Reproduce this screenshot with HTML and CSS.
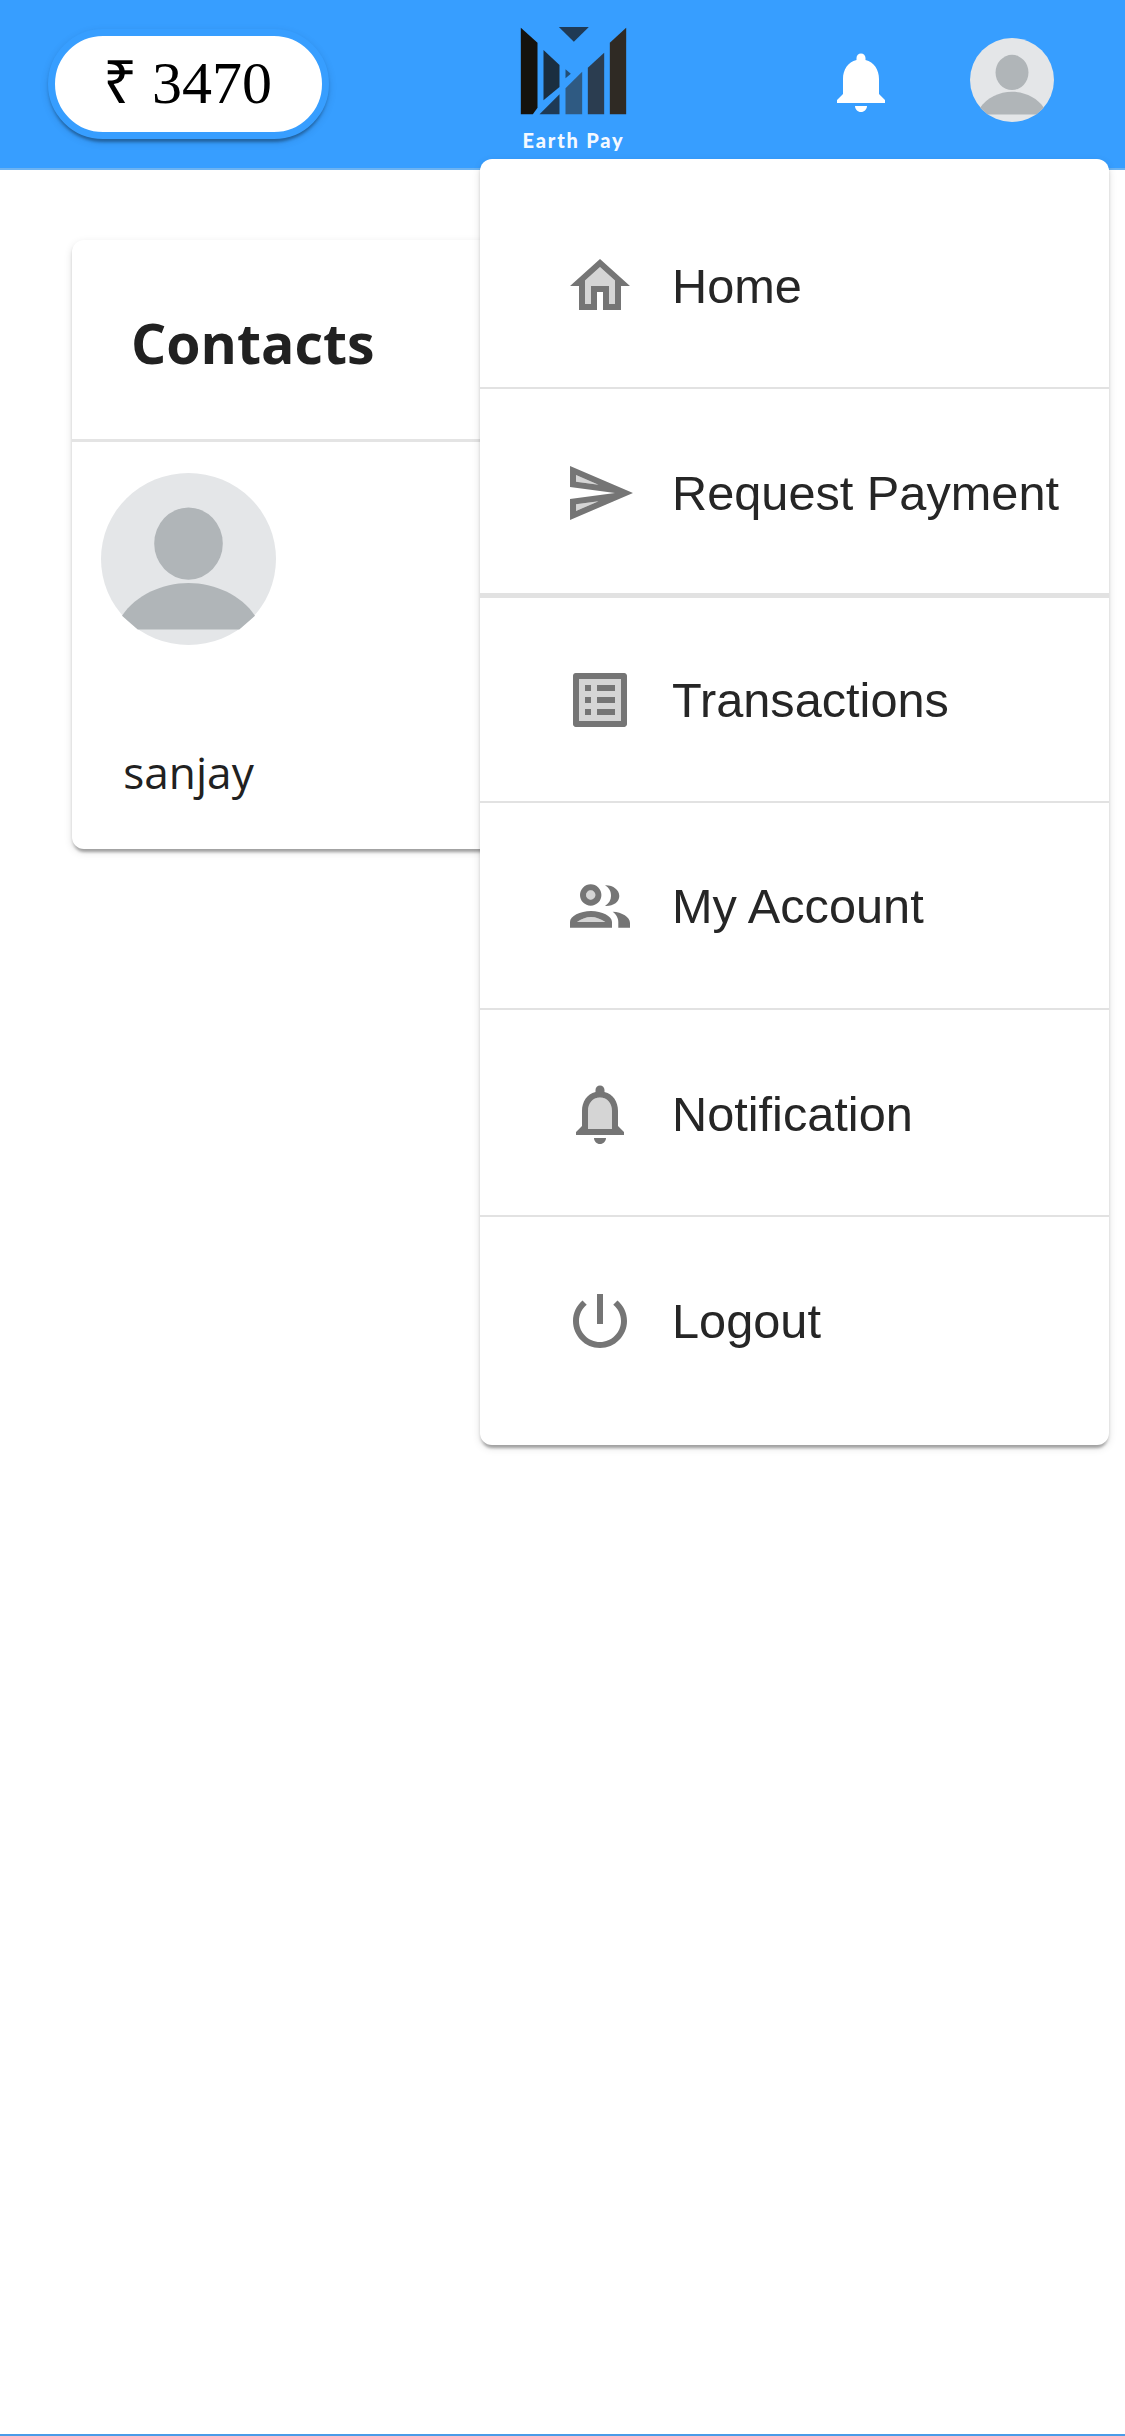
FILE: index.html
```html
<!DOCTYPE html>
<html lang="en">
<head>
<meta charset="utf-8">
<title>Earth Pay</title>
<link rel="stylesheet" href="styles.css">
</head>
<body>
<div class="page">
  <header class="topbar">
    <div class="balance">₹ 3470</div>
    <div class="brand">
      <svg class="brand-mark" viewBox="120 75 320 270">
        <path fill="#14120d" d="M122 80L172 125V320L158 340H122Z"/>
        <path fill="#1a2e40" d="M190 147L238 192V258L190 298Z"/>
        <path fill="#234e75" d="M256 205L272 218L256 232Z"/>
        <path fill="#1e3a55" d="M178 340L238 280V340Z"/>
        <path fill="#2f5a82" d="M256 262L306 212V340H256Z"/>
        <path fill="#2b3d50" d="M323 200L372 155V340H323Z"/>
        <path fill="#2f2a24" d="M389 125L438 80V340H389Z"/>
        <path fill="#1f3a55" d="M236 78H326L281 122Z"/>
      </svg>
      <span class="brand-name">Earth Pay</span>
    </div>
    <svg class="bell" viewBox="0 0 24 24"><path fill="#fff" d="M12 22c1.1 0 2-.9 2-2h-4c0 1.1.89 2 2 2zm6-6v-5c0-3.07-1.64-5.64-4.5-6.32V4c0-.83-.67-1.5-1.5-1.5s-1.5.67-1.5 1.5v.68C7.63 5.36 6 7.92 6 11v5l-2 2v1h16v-1l-2-2z"/></svg>
    <svg class="avatar avatar-small" viewBox="0 0 100 100" preserveAspectRatio="none">
      <circle cx="50" cy="50" r="50" fill="#e4e6e8"/>
      <ellipse cx="50" cy="41" rx="19.6" ry="21" fill="#b0b5b8"/>
      <path fill="#b0b5b8" d="M12 83C20 71 35 64 50 64C65 64 80 71 88 83L79 91H21Z"/>
    </svg>
  </header>

  <main class="content">
    <section class="card">
      <h1 class="card-title">Contacts</h1>
      <div class="contact">
        <svg class="avatar avatar-large" viewBox="0 0 100 100" preserveAspectRatio="none">
          <circle cx="50" cy="50" r="50" fill="#e4e6e8"/>
          <ellipse cx="50" cy="41" rx="19.6" ry="21" fill="#b0b5b8"/>
          <path fill="#b0b5b8" d="M12 83C20 71 35 64 50 64C65 64 80 71 88 83L79 91H21Z"/>
        </svg>
        <span class="contact-name">sanjay</span>
      </div>
    </section>
  </main>

  <nav class="menu">
    <a class="menu-item">
      <svg class="menu-icon" viewBox="0 0 24 24"><path opacity=".3" d="M7 10.19V18h2v-6h6v6h2v-7.81l-5-4.5z"/><path d="M12 3L2 12h3v8h6v-6h2v6h6v-8h3L12 3zm5 15h-2v-6H9v6H7v-7.81l5-4.5 5 4.5V18z"/></svg>
      <span>Home</span>
    </a>
    <a class="menu-item menu-item-thick">
      <svg class="menu-icon" viewBox="0 0 24 24"><path opacity=".3" d="M4 6.03l7.51 3.22-7.52-1 .01-2.22zm7.5 8.72L4 17.97v-2.22l7.5-1z"/><path d="M2.01 3L2 10l15 2-15 2 .01 7L23 12 2.01 3zM4 8.25V6.03l7.51 3.22-7.51-.99zm.01 9.72v-2.22l7.51-1-7.51 3.22z"/></svg>
      <span>Request Payment</span>
    </a>
    <a class="menu-item menu-item-short menu-item-flush">
      <svg class="menu-icon" viewBox="0 0 24 24"><path opacity=".3" d="M5 19h14V5H5v14zm6-12h6v2h-6V7zm0 4h6v2h-6v-2zm0 4h6v2h-6v-2zM7 7h2v2H7V7zm0 4h2v2H7v-2zm0 4h2v2H7v-2z"/><path d="M11 7h6v2h-6zm0 4h6v2h-6zm0 4h6v2h-6zM7 7h2v2H7zm0 4h2v2H7zm0 4h2v2H7zM20.1 3H3.9c-.5 0-.9.4-.9.9v16.2c0 .4.4.9.9.9h16.2c.4 0 .9-.5.9-.9V3.9c0-.5-.5-.9-.9-.9zM19 19H5V5h14v14z"/></svg>
      <span>Transactions</span>
    </a>
    <a class="menu-item menu-item-flush">
      <svg class="menu-icon" viewBox="0 0 72 72">
        <circle cx="26.7" cy="25" r="4.7" opacity=".3"/>
        <path opacity=".3" d="M13 52C17 49 22 47 27 47C32 47 37 49 41.3 52Z"/>
        <path fill-rule="evenodd" d="M26.7 14.3a10.7 10.7 0 1 1 0 21.4a10.7 10.7 0 1 1 0-21.4ZM26.7 20.3a4.7 4.7 0 1 0 0 9.4a4.7 4.7 0 1 0 0-9.4Z"/>
        <path d="M41 15.3C49 15 55.3 20 55.3 26C55.3 32 49 36.5 41 36C45 33 47 30 47 26C47 21 45 18 41 15.3Z"/>
        <path fill-rule="evenodd" d="M6 57.7V52C6 46 16 41 27 41C38 41 48 46 48 52V57.7ZM13 52H41.3C37 49 32 47 27 47C22 47 17 49 13 52Z"/>
        <path d="M48.7 41.7C58 42 66 47 66 53V57.7H54.3V52C54.3 48 52 44 48.7 41.7Z"/>
      </svg>
      <span>My Account</span>
    </a>
    <a class="menu-item">
      <svg class="menu-icon" viewBox="0 0 24 24"><path opacity=".3" d="M12 6.5c-2.49 0-4 2.02-4 4.5v6h8v-6c0-2.48-1.51-4.5-4-4.5z"/><path d="M12 22c1.1 0 2-.9 2-2h-4c0 1.1.9 2 2 2zm6-6v-5c0-3.07-1.63-5.64-4.5-6.32V4c0-.83-.67-1.5-1.5-1.5s-1.5.67-1.5 1.5v.68C7.64 5.36 6 7.92 6 11v5l-2 2v1h16v-1l-2-2zm-2 1H8v-6c0-2.48 1.51-4.5 4-4.5s4 2.02 4 4.5v6z"/></svg>
      <span>Notification</span>
    </a>
    <a class="menu-item menu-item-last menu-item-flush">
      <svg class="menu-icon" viewBox="0 0 24 24"><path d="M13 3h-2v10h2V3zm4.83 2.17l-1.42 1.42C17.99 7.86 19 9.81 19 12c0 3.87-3.13 7-7 7s-7-3.13-7-7c0-2.19 1.01-4.14 2.58-5.42L6.17 5.17C4.23 6.82 3 9.26 3 12c0 4.97 4.03 9 9 9s9-4.03 9-9c0-2.74-1.23-5.18-3.17-6.83z"/></svg>
      <span>Logout</span>
    </a>
  </nav>

  <div class="bottom-rule"></div>
</div>
</body>
</html>
```
FILE: styles.css
```css
* { box-sizing: border-box; }
html, body { margin: 0; height: 100%; background: #fff; }
body { overflow: hidden; }
.page {
  position: relative;
  height: 100vh;
  display: flex;
  flex-direction: column;
  font-family: "Liberation Sans", Arial, sans-serif;
}
.topbar {
  height: 170px;
  flex: none;
  display: flex;
  align-items: flex-start;
  padding-left: 48px;
  background: #379eff;
  border-bottom: 2px solid #6cb3f2;
}
.balance {
  width: 281px;
  height: 110px;
  margin-top: 29px;
  padding: 0 2px 9px 0;
  display: flex;
  align-items: center;
  justify-content: center;
  background: #fff;
  border: 7px solid #379eff;
  border-radius: 55px;
  box-shadow: 0 6px 3px -3px rgba(0,0,0,.2), 0 3px 3px 0 rgba(0,0,0,.14), 0 3px 9px 0 rgba(0,0,0,.12);
  font-family: "Liberation Serif", "Times New Roman", serif;
  font-size: 60px;
  color: #000;
}
.brand {
  width: 107px;
  margin: 26px 0 0 191px;
  display: flex;
  flex-direction: column;
  align-items: center;
}
.brand-mark { width: 107px; height: 90px; display: block; }
.brand-name {
  margin-top: 12px;
  font-family: Lato, sans-serif;
  font-weight: 900;
  font-size: 20px;
  line-height: 24px;
  letter-spacing: 1.8px;
  color: #f4f9ff;
  white-space: nowrap;
}
.bell { width: 72px; height: 72px; margin: 46px 0 0 198px; flex: none; }
.avatar { display: block; flex: none; }
.avatar-small { width: 84px; height: 84px; margin: 38px 0 0 73px; }
.content { flex: 1; padding: 70px 72px 0; }
.card {
  height: 609px;
  background: #fff;
  border-radius: 12px;
  box-shadow: 0 6px 3px -3px rgba(0,0,0,.2), 0 3px 3px 0 rgba(0,0,0,.14), 0 3px 9px 0 rgba(0,0,0,.12);
}
.card-title {
  height: 202px;
  margin: 0;
  padding: 6px 0 0 59px;
  display: flex;
  align-items: center;
  border-bottom: 3px solid #e4e4e4;
  font-family: "Open Sans", sans-serif;
  font-weight: 700;
  font-size: 55.4px;
  color: #212121;
}
.contact {
  width: 175px;
  margin: 31px 0 0 29px;
  display: flex;
  flex-direction: column;
  align-items: center;
}
.avatar-large { width: 175px; height: 172px; }
.contact-name {
  margin-top: 97px;
  font-family: "Open Sans", sans-serif;
  font-size: 44.2px;
  line-height: 60px;
  color: #212121;
}
.menu {
  position: absolute;
  top: 159px;
  left: 480px;
  width: 629px;
  height: 1286px;
  padding: 23px 0 0;
  background: #fff;
  border-radius: 12px;
  box-shadow: 0 6px 3px -3px rgba(0,0,0,.2), 0 3px 3px 0 rgba(0,0,0,.14), 0 3px 9px 0 rgba(0,0,0,.12);
}
.menu-item {
  height: 207px;
  padding: 3px 0 0 84px;
  display: flex;
  align-items: center;
  gap: 36px;
  border-bottom: 2px solid #e2e2e2;
  font-size: 48.7px;
  color: #262626;
}
.menu-item-thick { height: 209px; border-bottom-width: 5px; }
.menu-item-short { height: 205px; }
.menu-item-flush { padding-top: 0; }
.menu-item-last { border-bottom: 0; }
.menu-icon { width: 72px; height: 72px; flex: none; fill: #757575; }
.bottom-rule { height: 2px; flex: none; background: #4a9be8; }
```
